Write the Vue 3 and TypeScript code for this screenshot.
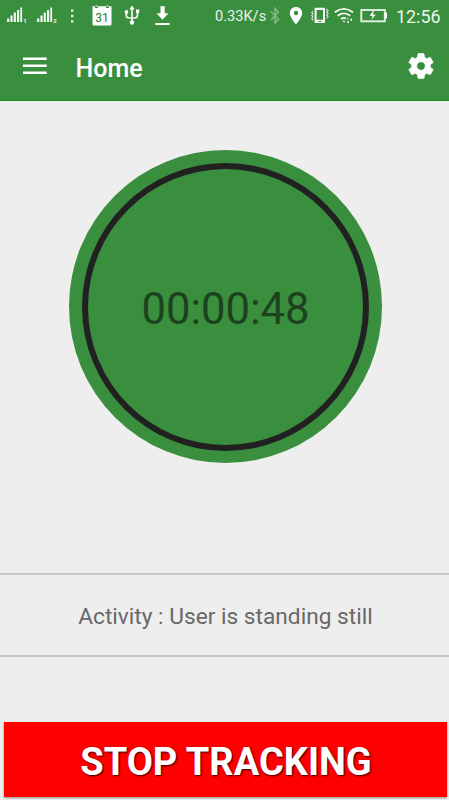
<script setup lang="ts">
import { ref } from 'vue'

const elapsed = ref('00:00:48')
const activity = ref('User is standing still')
const speed = ref('0.33K/s')
const clock = ref('12:56')
const sims = [1, 2]
</script>

<template>
  <div class="screen">
    <header class="top">
      <div class="status">
        <svg v-for="sim in sims" :key="sim" class="signal" viewBox="0 0 22 32">
          <path d="M1.200 18.500V22M4.500 15.500V22M7.800 12.500V22M11.100 10V22" stroke="#f1f7f1" stroke-width="2.200" />
          <path d="M14.200 7.500V22" stroke="#f1f7f1" stroke-width="1.800" />
          <text x="16.300" y="22.700" class="sim">{{ sim }}</text>
        </svg>
        <svg class="dots" viewBox="0 0 4 32">
          <path d="M0 9.300h2.400v2.400H0zM0 14.800h2.400v2.400H0zM0 20.300h2.400v2.400H0z" fill="#dcecdc" />
        </svg>
        <svg class="calendar" viewBox="0 0 20 32">
          <path d="M.5 6.200H3V8H6V6.200H14V8H17V6.200H19.500V24Q19.500 25.500 18 25.500H2Q.5 25.500 .5 24Z" fill="#fff" />
          <path d="M3.500 6h2M14.500 6h2" stroke="#d5e8d5" stroke-width="1.300" />
          <text x="9.900" y="21.500" class="day">31</text>
        </svg>
        <svg class="usb" viewBox="0 0 16 32">
          <g fill="none" stroke="#f1f7f1" stroke-width="1.700">
            <path d="M8 8V22M2.300 13V15Q2.300 18 5 18H10.500Q13.500 18 13.500 15V12" />
          </g>
          <path d="M8 5.500L10.700 9.500H5.300ZM12 9.500H15.200V13H12Z" fill="#fff" />
          <circle cx="2.500" cy="12" r="1.900" fill="#fff" />
          <circle cx="8" cy="22.500" r="2.200" fill="#fff" />
        </svg>
        <svg class="download" viewBox="0 0 16 32">
          <path d="M5.500 6.300H9.700V13.300H13.500L7.500 19.800L1.500 13.300H5.500ZM.3 23H14.500V25H.3Z" fill="#fff" />
        </svg>
        <span class="speed">{{ speed }}</span>
        <svg class="bluetooth" viewBox="0 0 12 32">
          <path d="M1 11.500L8.500 19.300L5 23V8.500L8.500 12.200L1 20" fill="none" stroke="#83b985" stroke-width="1.500" />
        </svg>
        <svg class="pin" viewBox="0 0 14 32">
          <path fill-rule="evenodd" d="M7 7C3.500 7 .8 9.700 .8 13.100C.8 17.600 7 24.500 7 24.500S13.200 17.600 13.200 13.100C13.200 9.700 10.500 7 7 7ZM7 10.800A2.200 2.200 0 1 1 7 15.200A2.200 2.200 0 1 1 7 10.800Z" fill="#fff" />
        </svg>
        <svg class="vibrate" viewBox="0 0 18 32">
          <path fill-rule="evenodd" d="M4.300 7.700H13.300Q14 7.700 14 8.500V22.300Q14 23 13.300 23H4.300Q3.600 23 3.600 22.300V8.500Q3.600 7.700 4.300 7.700ZM5.600 10V19.800H12V10ZM7.500 21V22H10.300V21Z" fill="#f5faf5" />
          <path d="M2 11L.8 12.500L2 14L.8 15.500L2 17L.8 18.500L2 20.500M15.500 9L17 10.500L15.700 12L17 13.500L15.700 15L17 16.500L15.500 18.500" fill="none" stroke="#cfe4cf" stroke-width="1.200" />
        </svg>
        <svg class="wifi" viewBox="0 0 20 32">
          <path d="M.7 12.200Q10 5.500 19 12.200M3.700 15.700Q10 11.100 16.200 15.700M7 18.900Q9.800 17 12 18.500" fill="none" stroke="#f5faf5" stroke-width="1.800" />
          <path d="M8.300 20.500H11L10.500 23ZM13 17.500L15 19.500H13ZM16.500 18.500H18V21H16.500ZM13 21.200H15V23H13Z" fill="#dfeedf" />
        </svg>
        <svg class="battery" viewBox="0 0 28 32">
          <rect x="1.300" y="10" width="23.500" height="11.300" fill="none" stroke="#e3f0e3" stroke-width="1.900" />
          <path d="M25 12.500H27V18.500H25ZM13.200 10.500L9.700 16H12.500L11.500 20L15.700 14.500H12.800L14.200 10.500Z" fill="#f5faf5" />
        </svg>
        <span class="clock">{{ clock }}</span>
      </div>
      <div class="appbar">
        <button class="icon-button menu" aria-label="Menu">
          <svg viewBox="0 0 24 18"><path d="M0 1.700H23.700M0 8.700H23.700M0 15.700H23.700" stroke="#fff" stroke-width="2.400" /></svg>
        </button>
        <h1>Home</h1>
        <button class="icon-button settings" aria-label="Settings">
          <svg viewBox="1.500 1.500 21 21"><path fill="#fff" stroke="#fff" stroke-width=".6" d="M19.430 12.980c.04-.32.07-.64.07-.98s-.03-.66-.07-.98l2.110-1.650c.19-.15.24-.42.12-.64l-2-3.460c-.12-.22-.39-.3-.61-.22l-2.490 1c-.52-.4-1.080-.73-1.690-.98l-.38-2.650C14.460 2.180 14.250 2 14 2h-4c-.25 0-.46.18-.49.42l-.38 2.650c-.61.25-1.170.59-1.690.98l-2.490-1c-.23-.09-.49 0-.61.22l-2 3.460c-.13.22-.07.49.12.64l2.110 1.650c-.04.32-.07.65-.07.98s.03.66.07.98l-2.110 1.650c-.19.15-.24.42-.12.64l2 3.460c.12.22.39.3.61.22l2.490-1c.52.4 1.080.73 1.690.98l.38 2.650c.03.24.24.42.49.42h4c.25 0 .46-.18.49-.42l.38-2.650c.61-.25 1.170-.59 1.690-.98l2.490 1c.23.09.49 0 .61-.22l2-3.460c.12-.22.07-.49-.12-.64l-2.110-1.650zM12 15.500c-1.930 0-3.500-1.570-3.500-3.500s1.570-3.500 3.500-3.500 3.500 1.570 3.500 3.500-1.570 3.500-3.500 3.500z" /></svg>
        </button>
      </div>
    </header>
    <main>
      <div class="dial">
        <div class="ring"><time>{{ elapsed }}</time></div>
      </div>
      <p class="activity">Activity : {{ activity }}</p>
      <button class="stop">STOP TRACKING</button>
    </main>
  </div>
</template>

<style>
body {
  margin: 0;
  background: #eee;
}
</style>

<style scoped>
.screen {
  display: flex;
  flex-direction: column;
  width: 449px;
  height: 800px;
  overflow: hidden;
  background: #eee;
  font-family: Roboto, "Liberation Sans", sans-serif;
}
.top {
  box-sizing: border-box;
  height: 101px;
  background: #3a8f3e;
  border-bottom: 1px solid #1e8c22;
  color: #fff;
}
.status {
  display: flex;
  height: 32px;
  padding-left: 7px;
}
.status svg {
  flex: none;
  height: 32px;
  overflow: visible;
}
.signal { width: 22px; margin-right: 8px; }
.sim { font-size: 6px; font-weight: 700; fill: #f1f7f1; }
.dots { width: 4px; margin-left: 4px; }
.calendar { width: 20px; margin-left: 17px; }
.day { font-size: 12px; font-weight: 400; fill: #2b8030; text-anchor: middle; }
.usb { width: 16px; margin-left: 12px; }
.download { width: 16px; margin-left: 15px; }
.speed {
  width: 54px;
  margin-left: 44px;
  font-size: 14.600px;
  line-height: 33px;
  color: #e9f4e9;
  white-space: nowrap;
}
.bluetooth { width: 12px; margin-left: 1px; }
.pin { width: 14px; margin-left: 7px; }
.vibrate { width: 18px; margin-left: 8px; }
.wifi { width: 20px; margin-left: 5px; }
.battery { width: 28px; margin-left: 6px; }
.clock {
  margin-left: 8px;
  font-size: 17.900px;
  line-height: 33px;
  color: #edf5ed;
}
.appbar {
  display: flex;
  align-items: center;
  height: 68px;
  padding: 0 15px 0 23px;
}
.icon-button {
  display: block;
  padding: 0;
  border: 0;
  background: none;
}
.icon-button svg { display: block; width: 100%; height: 100%; }
.menu { width: 24px; height: 18px; }
.settings { width: 26px; height: 26px; margin-left: auto; }
h1 {
  margin: 6px 0 0 28.500px;
  font-size: 25px;
  font-weight: 500;
  line-height: 30px;
}
main {
  display: flex;
  flex: 1;
  flex-direction: column;
  align-items: center;
}
.dial {
  box-sizing: border-box;
  width: 313px;
  height: 313px;
  margin: 49px 0 110px 2px;
  padding: 13px;
  border-radius: 50%;
  background: #3a8f3e;
}
.ring {
  box-sizing: border-box;
  display: flex;
  align-items: center;
  justify-content: center;
  width: 287px;
  height: 288px;
  padding-top: 4px;
  border: 6px solid #212121;
  border-radius: 50%;
}
time {
  font-size: 43.600px;
  color: #1c431e;
}
.activity {
  box-sizing: border-box;
  width: 100%;
  height: 84px;
  margin: 0;
  padding-left: 2px;
  border: solid #c8c8c8;
  border-width: 2px 0;
  font-size: 22.700px;
  line-height: 84px;
  text-align: center;
  color: #686868;
}
.stop {
  width: 443px;
  height: 75px;
  margin: 65px 0 0 2px;
  padding: 4px 0 0 1px;
  border: 0;
  background: #f00;
  box-shadow: 0 1px 2px rgba(0, 0, 0, .4);
  font-family: inherit;
  font-size: 38px;
  font-weight: 700;
  color: #fff;
  text-shadow: 1px 1px 2px rgba(0, 0, 0, .8);
}
</style>
